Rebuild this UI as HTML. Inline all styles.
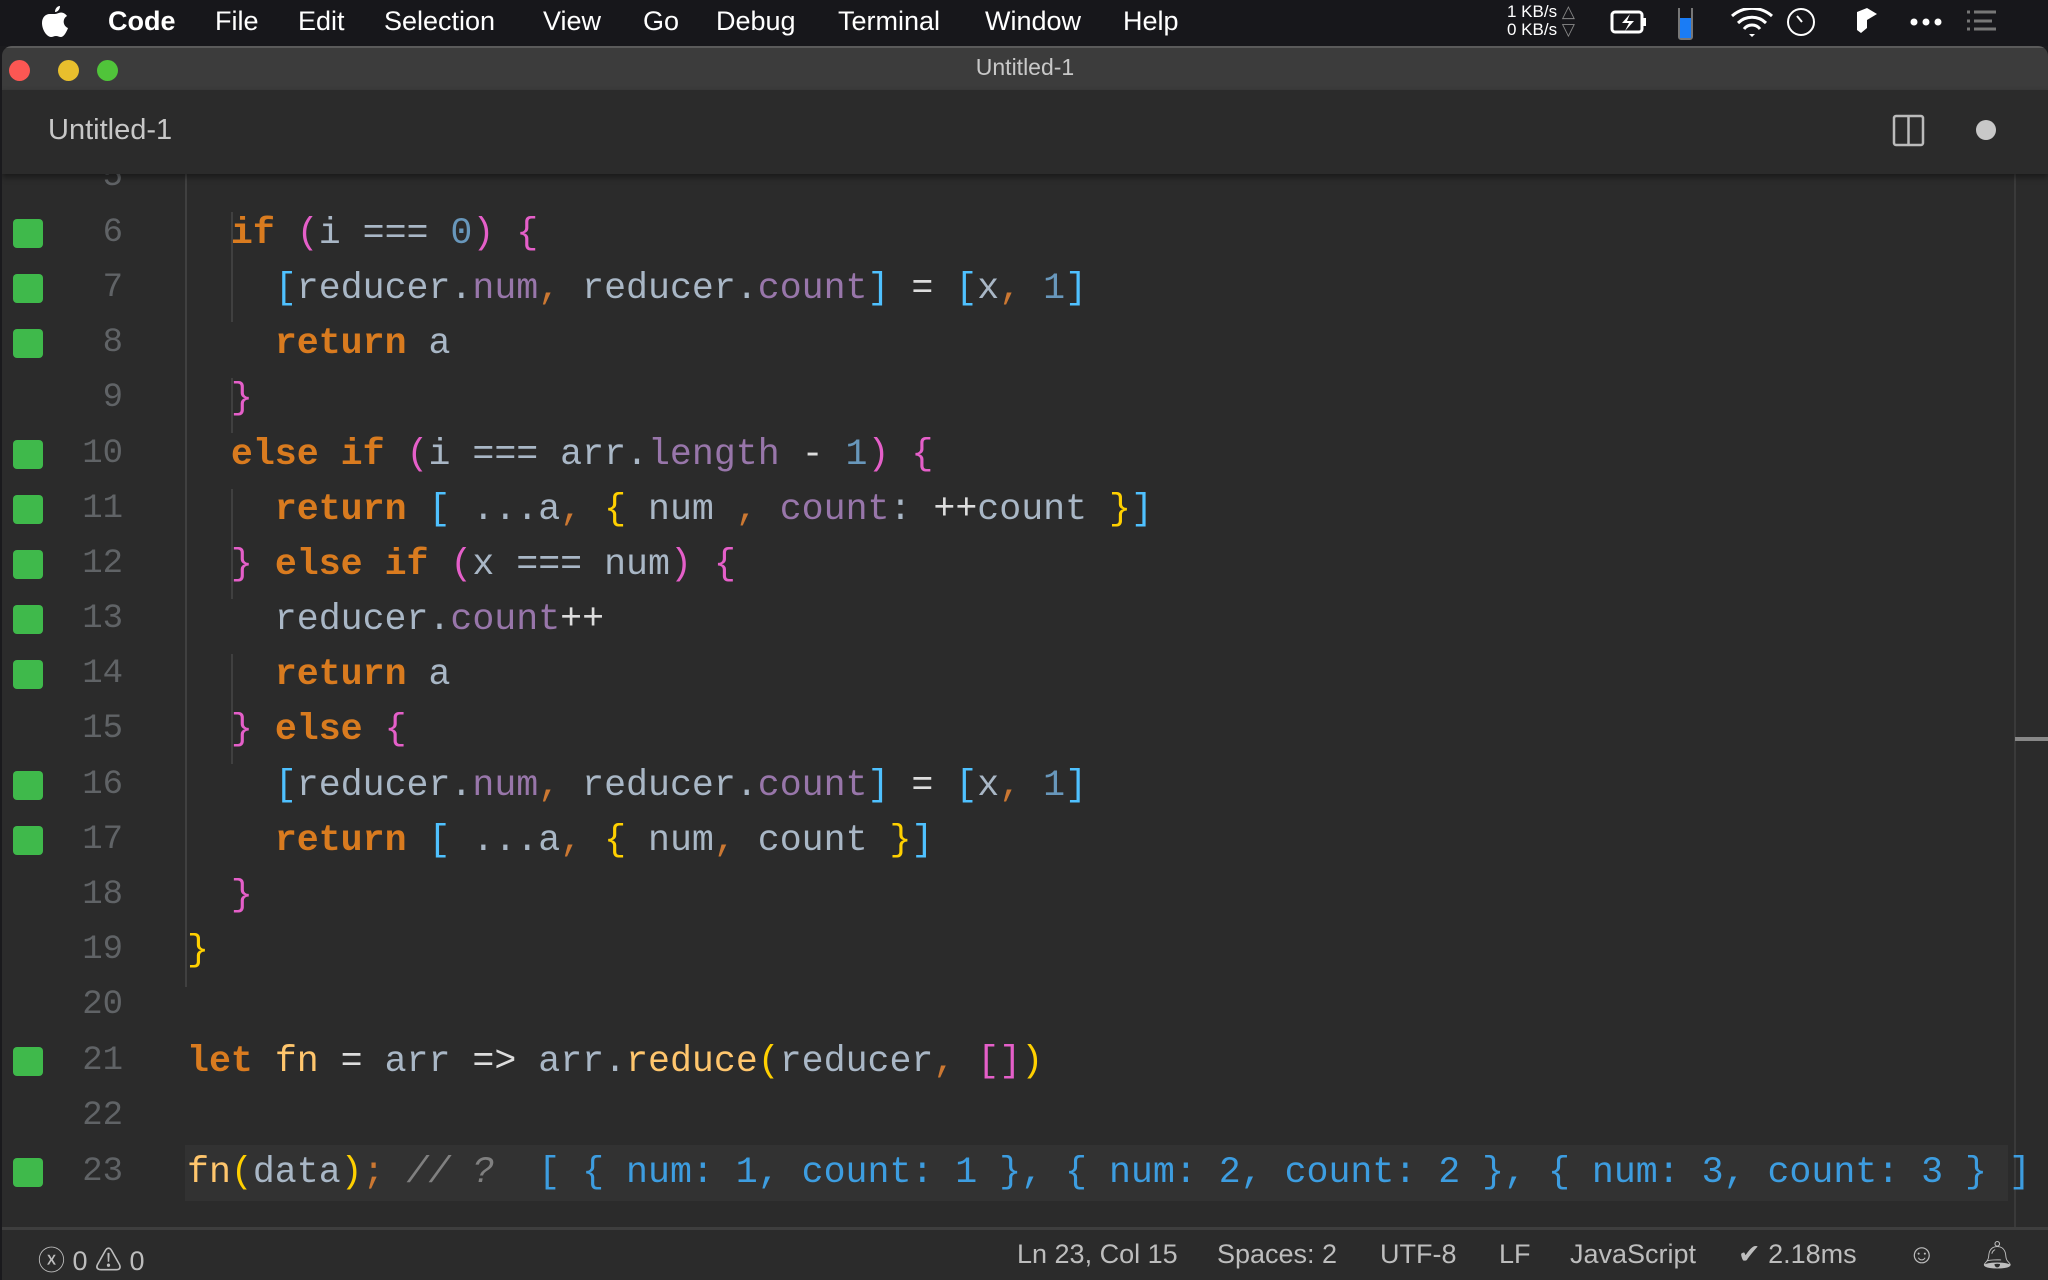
<!DOCTYPE html>
<html><head><meta charset="utf-8"><style>
*{margin:0;padding:0;box-sizing:border-box}
body{width:2048px;height:1280px;background:#1a1a1d;position:relative;overflow:hidden;font-family:"Liberation Sans",sans-serif}
.menu{position:absolute;left:0;top:0;width:2048px;height:46px;background:#17171b;color:#fff;font-size:27px}
.menu span{position:absolute;top:6px}
.win{position:absolute;left:2px;top:46px;width:2046px;height:1234px;background:#2b2b2b;border-radius:10px 10px 0 0;overflow:hidden}
.title{position:absolute;left:0;top:0;width:100%;height:44px;background:#3c3c3c;border-top:2px solid #5a5a5a}
.title .t{position:absolute;left:0;width:100%;text-align:center;top:6px;color:#c8c8c8;font-size:23px}
.dot{position:absolute;top:12px;width:21px;height:21px;border-radius:50%}
.tabs{position:absolute;left:0;top:44px;width:100%;height:84px;background:#2b2b2b;box-shadow:0 3px 6px rgba(0,0,0,.45);z-index:2}
.tabs .t{position:absolute;left:46px;top:24px;color:#c8c8c8;font-size:29px}
.ed{position:absolute;left:0;top:128px;width:100%;height:1053px;overflow:hidden}
.ln{position:absolute;left:0;width:121px;text-align:right;font-family:"Liberation Mono",monospace;font-size:34px;color:#606366;height:55px;line-height:55px}
.gs{position:absolute;left:11px;width:30px;height:29px;background:#3fb94b;border-radius:4px}
.c{position:absolute;left:185px;white-space:pre;font-family:"Liberation Mono",monospace;font-size:36.6px;height:55px;line-height:55px;color:#a9b7c6}
.k{color:#d97b1f;font-weight:bold}.p{color:#e55fc9}.v{color:#a9b7c6}.pr{color:#9876aa}.n{color:#6897bb}.b{color:#4fc1ff}.y{color:#ffd000}.o{color:#cc7832}.f{color:#ffc66d}.w{color:#ddd}.cm{color:#808080;font-style:italic}.r{color:#3d9de0}
.guide{position:absolute;width:2px;background:#404040}
.status{position:absolute;left:0;top:1181px;width:100%;height:53px;background:#2b2b2b;border-top:3px solid #3e3e3e;color:#bdbdbd;font-size:27px}
.status span{position:absolute;top:9px}
</style></head><body>
<div class="menu">
<svg style="position:absolute;left:42px;top:6px" width="26" height="32" viewBox="0 0 26 32"><path fill="#fff" d="M18 0c0 3-2 6-5 6 0-3 2-6 5-6zM13 8c2 0 4-1.5 6-1.5 3 0 5 2 6 3.5-5 3-4 10 1 12-1 3-4 9-7 9-2 0-3-1-5-1s-3 1-5 1C5 31 0 24 0 17 0 11 4 8 7.5 8 10 8 11 8 13 8z"/></svg>
<span style="left:108px;font-weight:bold">Code</span><span style="left:215px">File</span><span style="left:298px">Edit</span><span style="left:384px">Selection</span><span style="left:543px">View</span><span style="left:643px">Go</span><span style="left:716px">Debug</span><span style="left:838px">Terminal</span><span style="left:985px">Window</span><span style="left:1123px">Help</span>
<div style="position:absolute;left:1507px;top:3px;font-size:17px;line-height:18px;color:#fff">1 KB/s <span style="position:static;color:#888">△</span><br>0 KB/s <span style="position:static;color:#888">▽</span></div>
<svg style="position:absolute;left:1610px;top:8px" width="600" height="32"><rect x="2" y="4" width="30" height="20" rx="3" fill="none" stroke="#fff" stroke-width="3"/><rect x="33" y="10" width="3" height="8" fill="#fff"/><path d="M20 6l-8 9h7l-4 8 9-10h-7z" fill="#fff"/>
<rect x="69" y="-3" width="13" height="34" rx="2" fill="none" stroke="#777" stroke-width="2"/><rect x="70" y="10" width="11" height="20" fill="#1a7cf5"/>
<path d="M122 8a30 30 0 0 1 40 0M128 15a20 20 0 0 1 28 0M134 21a10 10 0 0 1 16 0" stroke="#fff" stroke-width="3" fill="none"/><path d="M139 26l3 3 3-3z" fill="#fff"/>
<circle cx="191" cy="14" r="13" fill="none" stroke="#fff" stroke-width="2"/><path d="M187 8l5 6" stroke="#fff" stroke-width="2"/>
<path d="M247 4l10-4 10 6-10 6v8l-6 5-4-3z" fill="#fff"/>
<circle cx="304" cy="14" r="3.5" fill="#fff"/><circle cx="316" cy="14" r="3.5" fill="#fff"/><circle cx="328" cy="14" r="3.5" fill="#fff"/>
<path d="M357 4h3M364 4h22M357 13h3M364 13h18M357 21h3M364 21h22" stroke="#777" stroke-width="3"/></svg>
</div>
<div class="win">
<div class="title"><div class="dot" style="left:7px;background:#fc5753"></div><div class="dot" style="left:56px;background:#e8bf2d"></div><div class="dot" style="left:95px;background:#50c43a"></div><div class="t">Untitled-1</div></div>
<div class="tabs"><div class="t">Untitled-1</div>
<svg style="position:absolute;left:1890px;top:24px" width="34" height="34"><rect x="2" y="2" width="29" height="29" rx="2" fill="none" stroke="#bbb" stroke-width="2.5"/><path d="M16.5 2v29" stroke="#bbb" stroke-width="2.5"/></svg>
<div style="position:absolute;left:1974px;top:30px;width:20px;height:20px;border-radius:50%;background:#c8c8c8"></div></div>
<div class="ed">
<div class="guide" style="left:183px;top:0;height:813px"></div>
<div class="guide" style="left:229px;top:38px;height:110px"></div>
<div class="guide" style="left:229px;top:204px;height:55px"></div>
<div class="guide" style="left:229px;top:315px;height:110px"></div>
<div class="guide" style="left:229px;top:480px;height:110px"></div>
<div style="position:absolute;left:183px;top:971px;width:1823px;height:56px;background:#323232"></div>
<div style="position:absolute;left:2012px;top:0;width:2px;height:1053px;background:#3a3a3a"></div>
<div style="position:absolute;left:2013px;top:563px;width:33px;height:4px;background:#888"></div>

<div class="ln" style="top:-24px">5</div>
<div class="gs" style="top:45px"></div><div class="ln" style="top:32px">6</div><div class="c" style="top:32px">  <span class="k">if</span> <span class="p">(</span>i === <span class="n">0</span><span class="p">)</span> <span class="p">{</span></div>
<div class="gs" style="top:100px"></div><div class="ln" style="top:87px">7</div><div class="c" style="top:87px">    <span class="b">[</span>reducer.<span class="pr">num</span><span class="o">,</span> reducer.<span class="pr">count</span><span class="b">]</span> <span class="w">=</span> <span class="b">[</span>x<span class="o">,</span> <span class="n">1</span><span class="b">]</span></div>
<div class="gs" style="top:155px"></div><div class="ln" style="top:142px">8</div><div class="c" style="top:142px">    <span class="k">return</span> a</div>
<div class="ln" style="top:197px">9</div><div class="c" style="top:197px">  <span class="p">}</span></div>
<div class="gs" style="top:266px"></div><div class="ln" style="top:253px">10</div><div class="c" style="top:253px">  <span class="k">else if</span> <span class="p">(</span>i === arr.<span class="pr">length</span> <span class="w">-</span> <span class="n">1</span><span class="p">)</span> <span class="p">{</span></div>
<div class="gs" style="top:321px"></div><div class="ln" style="top:308px">11</div><div class="c" style="top:308px">    <span class="k">return</span> <span class="b">[</span> ...a<span class="o">,</span> <span class="y">{</span> num <span class="o">,</span> <span class="pr">count</span>: <span class="w">++</span>count <span class="y">}</span><span class="b">]</span></div>
<div class="gs" style="top:376px"></div><div class="ln" style="top:363px">12</div><div class="c" style="top:363px">  <span class="p">}</span> <span class="k">else if</span> <span class="p">(</span>x === num<span class="p">)</span> <span class="p">{</span></div>
<div class="gs" style="top:431px"></div><div class="ln" style="top:418px">13</div><div class="c" style="top:418px">    reducer.<span class="pr">count</span><span class="w">++</span></div>
<div class="gs" style="top:486px"></div><div class="ln" style="top:473px">14</div><div class="c" style="top:473px">    <span class="k">return</span> a</div>
<div class="ln" style="top:528px">15</div><div class="c" style="top:528px">  <span class="p">}</span> <span class="k">else</span> <span class="p">{</span></div>
<div class="gs" style="top:597px"></div><div class="ln" style="top:584px">16</div><div class="c" style="top:584px">    <span class="b">[</span>reducer.<span class="pr">num</span><span class="o">,</span> reducer.<span class="pr">count</span><span class="b">]</span> <span class="w">=</span> <span class="b">[</span>x<span class="o">,</span> <span class="n">1</span><span class="b">]</span></div>
<div class="gs" style="top:652px"></div><div class="ln" style="top:639px">17</div><div class="c" style="top:639px">    <span class="k">return</span> <span class="b">[</span> ...a<span class="o">,</span> <span class="y">{</span> num<span class="o">,</span> count <span class="y">}</span><span class="b">]</span></div>
<div class="ln" style="top:694px">18</div><div class="c" style="top:694px">  <span class="p">}</span></div>
<div class="ln" style="top:749px">19</div><div class="c" style="top:749px"><span class="y">}</span></div>
<div class="ln" style="top:804px">20</div>
<div class="gs" style="top:873px"></div><div class="ln" style="top:860px">21</div><div class="c" style="top:860px"><span class="k">let</span> <span class="f">fn</span> <span class="w">=</span> arr <span class="w">=&gt;</span> arr.<span class="f">reduce</span><span class="y">(</span>reducer<span class="o">,</span> <span class="p">[]</span><span class="y">)</span></div>
<div class="ln" style="top:915px">22</div>
<div class="gs" style="top:984px"></div><div class="ln" style="top:971px">23</div><div class="c" style="top:971px"><span class="f">fn</span><span class="y">(</span>data<span class="y">)</span><span class="o">;</span> <span class="cm">// ?</span>  <span class="r">[ { num: 1, count: 1 }, { num: 2, count: 2 }, { num: 3, count: 3 } ]</span></div>
</div>
<div class="status"><span style="left:36px">ⓧ 0 ⚠ 0</span><span style="left:1015px">Ln 23, Col 15</span><span style="left:1215px">Spaces: 2</span><span style="left:1378px">UTF-8</span><span style="left:1497px">LF</span><span style="left:1568px">JavaScript</span><span style="left:1736px">✔ 2.18ms</span><span style="left:1906px">☺</span><span style="left:1978px">🔔︎</span></div>
</div>
</body></html>
